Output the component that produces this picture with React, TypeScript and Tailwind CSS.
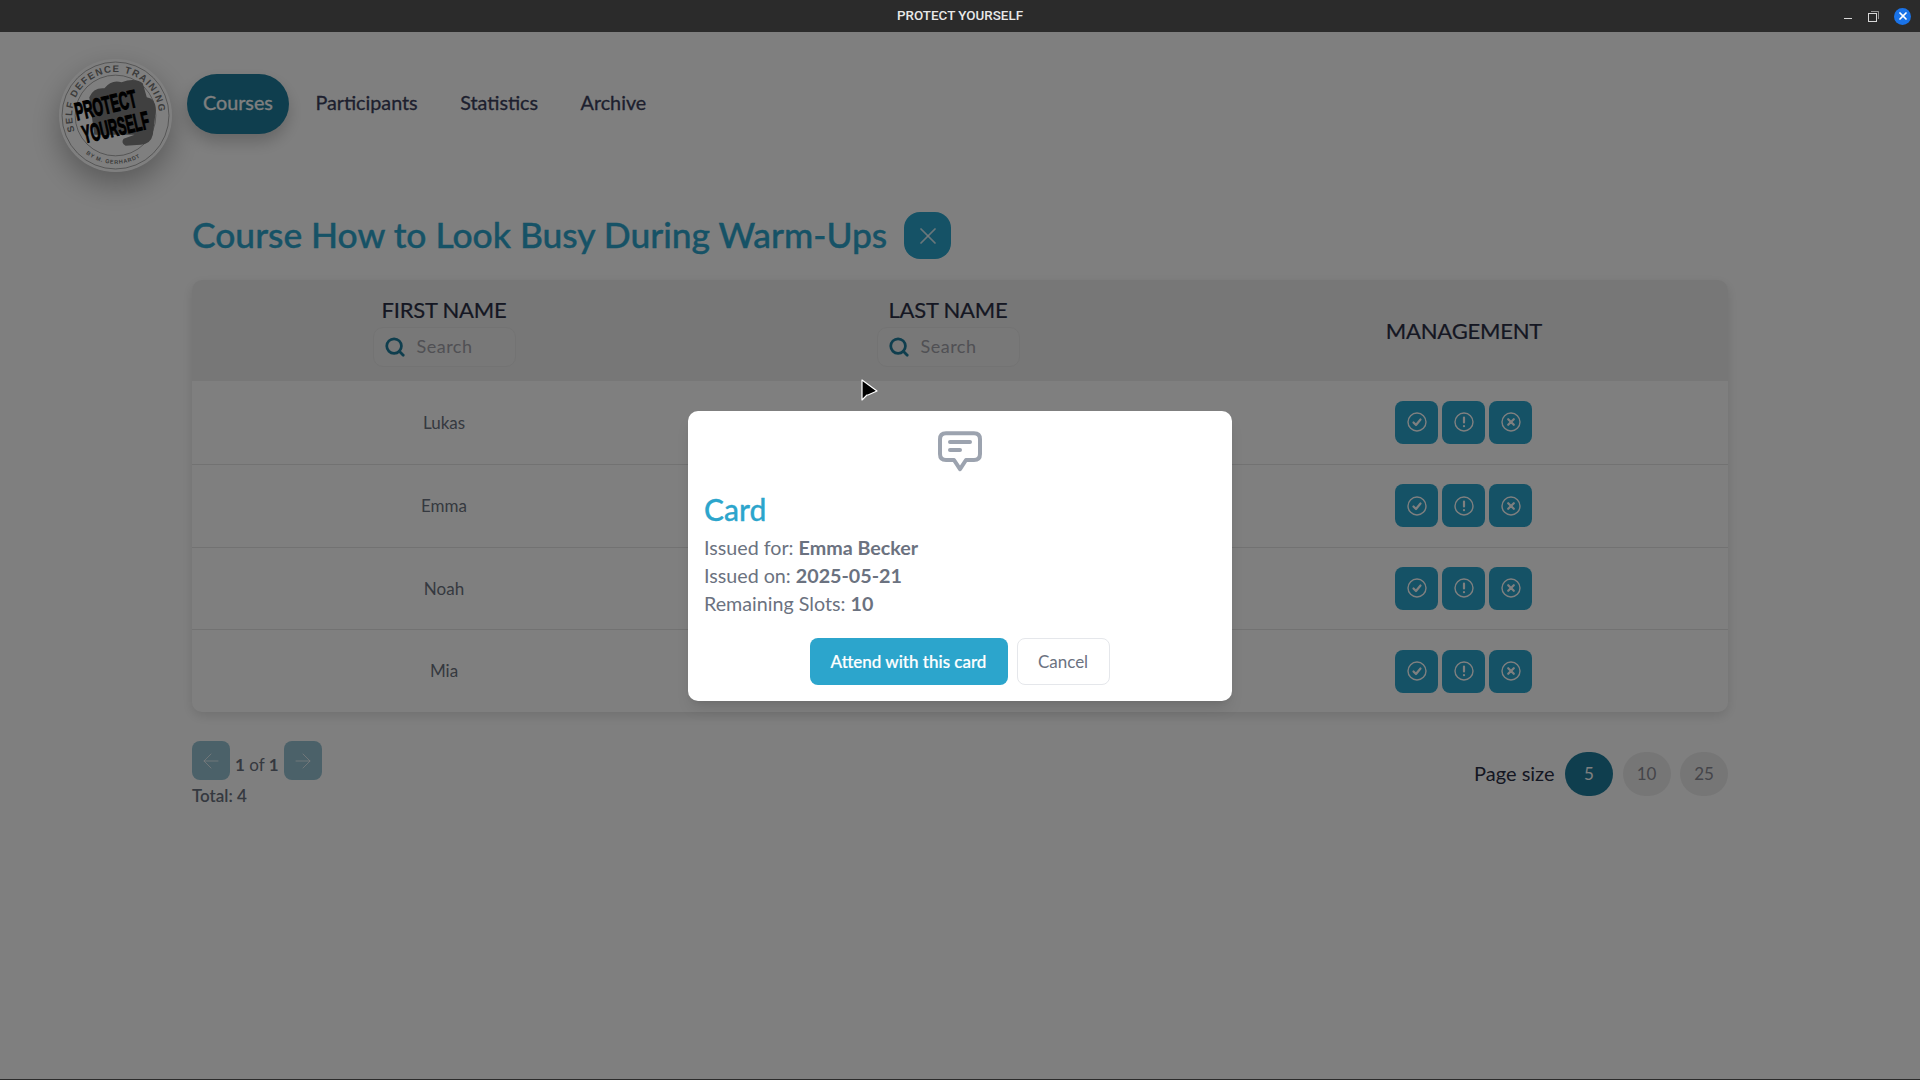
import { ArrowLeft, ArrowRight, Search, X } from "lucide-react";

const students = ["Lukas", "Emma", "Noah", "Mia"];

const Logo = () => (
    <svg viewBox="0 0 224 224" className="w-full h-full overflow-visible">
        <defs>
            <path id="logo-top" d="M 31.7 142.8 A 86 86 0 1 1 192.3 142.8" />
            <path id="logo-bottom" d="M 50.3 185.5 A 96 96 0 0 0 173.7 185.5" />
        </defs>
        <circle cx="112" cy="112" r="111" fill="#ffffff" />
        <circle cx="112" cy="112" r="106" fill="none" stroke="#8f8f8f" strokeWidth="1.5" />
        <circle cx="112" cy="112" r="80" fill="none" stroke="#8f8f8f" strokeWidth="1.5" />
        <text fill="#777" fontSize="19" fontWeight="700" fontFamily="Liberation Sans, sans-serif" letterSpacing="2.6">
            <textPath href="#logo-top">SELF DEFENCE TRAINING</textPath>
        </text>
        <text fill="#777" fontSize="11" fontWeight="700" fontFamily="Liberation Sans, sans-serif" letterSpacing="1.4">
            <textPath href="#logo-bottom" startOffset="4">BY M. GERHARDT</textPath>
        </text>
        <path d="M60 76 Q68 56 90 58 Q104 40 124 46 Q150 36 166 48 L174 76 Q192 78 192 102 L186 150 Q182 168 162 170 L132 172 Q122 166 128 158 L150 150 L70 150 Z" fill="#808080" />
        <g fill="#000" stroke="#000" strokeWidth="1.2" fontFamily="Liberation Sans, sans-serif" fontWeight="700">
            <text transform="translate(96 108) rotate(-13) scale(1 1.9)" textAnchor="middle" fontSize="26">PROTECT</text>
            <text transform="translate(116 152) rotate(-13) scale(0.95 1.9)" textAnchor="middle" fontSize="26">YOURSELF</text>
        </g>
    </svg>
);

const Cursor = () => (
    <svg viewBox="0 0 18 24" className="absolute left-[861px] top-[379px] w-[18px] h-[24px] z-30">
        <path d="M1 1 L1 21 L6 16 L7 16 L16 12 Z" fill="#000" stroke="#fff" strokeWidth="1.2" strokeLinejoin="round" />
    </svg>
);

const TitleBar = () => (
    <div className="relative h-8 shrink-0 bg-[#2b2b2b] flex items-center justify-center z-30">
        <span className="text-[13.4px] font-medium text-[#e8e8e8] mt-px" style={{ fontFamily: "Roboto, sans-serif" }}>PROTECT YOURSELF</span>
        <div className="absolute right-[9px] top-0 h-8 flex items-center gap-[15px] text-[#d8d8d8]">
            <span className="block w-2 h-px bg-[#d8d8d8] mt-[4px]"></span>
            <svg viewBox="0 0 11 11" className="w-[11px] h-[11px] ml-[1px]" fill="none" stroke="currentColor" strokeWidth="1">
                <rect x="0.5" y="2.5" width="8" height="8" />
                <path d="M3 0.5 H10.5 V8" opacity="0.6" />
            </svg>
            <span className="flex items-center justify-center w-[17px] h-[17px] rounded-full bg-[#1a73e8]">
                <X className="w-[12px] h-[12px] text-white" strokeWidth={3.5} />
            </span>
        </div>
    </div>
);

const Header = () => (
    <div className="flex items-start gap-[15px] pl-[59px] pt-[27px] h-[180px] shrink-0">
        <div className="w-[113px] h-[113px] rounded-full shadow-[0_12px_30px_rgba(0,0,0,0.3)]">
            <Logo />
        </div>
        <nav className="flex items-center gap-[10.5px] mt-[15px] text-[19.75px] text-[#3b3f5c] [-webkit-text-stroke:0.3px_currentColor]">
            <a className="h-[60px] flex items-center px-4 pb-[2px] rounded-[30px] bg-[#1e7d9c] text-white shadow-[0_8px_16px_rgba(0,0,0,0.2)]">Courses</a>
            <a className="h-[60px] flex items-center px-4 pb-[2px]">Participants</a>
            <a className="h-[60px] flex items-center px-4 pb-[2px]">Statistics</a>
            <a className="h-[60px] flex items-center px-4 pb-[2px]">Archive</a>
        </nav>
    </div>
);

const SearchBox = () => (
    <div className="flex items-center w-[143px] h-10 mx-auto rounded-[10px] border border-[#e6e6e6] bg-[#f0f0f0] pl-[10px] gap-[11px]">
        <Search className="w-[22px] h-[22px] text-[#1e7d9c]" strokeWidth={3} />
        <span className="text-[18px] tracking-[0.5px] text-[#a0a0a8] [-webkit-text-stroke:0px]">Search</span>
    </div>
);

const CheckIcon = () => (
    <svg viewBox="0 0 20 20" className="w-5 h-5" fill="none" stroke="currentColor" strokeLinecap="round" strokeLinejoin="round">
        <circle cx="10" cy="10" r="9" strokeWidth="1.4" />
        <path d="M6.5 10.5 L9 13 L13.5 7.5" strokeWidth="2.2" />
    </svg>
);

const AlertIcon = () => (
    <svg viewBox="0 0 20 20" className="w-5 h-5" fill="none" stroke="currentColor" strokeLinecap="round">
        <circle cx="10" cy="10" r="9" strokeWidth="1.4" />
        <path d="M10 5.5 V10.5 M10 14 V14.2" strokeWidth="2.2" />
    </svg>
);

const CrossIcon = () => (
    <svg viewBox="0 0 20 20" className="w-5 h-5" fill="none" stroke="currentColor" strokeLinecap="round">
        <circle cx="10" cy="10" r="9" strokeWidth="1.4" />
        <path d="M7.2 7.2 L12.8 12.8 M12.8 7.2 L7.2 12.8" strokeWidth="2.2" />
    </svg>
);

const ActionButton = ({ children }: { children: React.ReactNode }) => (
    <button className="w-[43px] h-[43px] flex items-center justify-center rounded-[8px] bg-[#2aa5cc] text-white">
        {children}
    </button>
);

const StudentsTable = () => (
    <div className="w-[1536px] rounded-[10px] bg-white shadow-[0_4px_12px_rgba(0,0,0,0.12)] overflow-hidden">
        <div className="grid grid-cols-[504px_504px_528px] h-[101px] bg-[#eeeeee] text-[22px] tracking-[-0.2px] text-[#2a2f45] text-center [-webkit-text-stroke:0.2px_currentColor]">
            <div className="flex flex-col justify-center gap-[2px]">
                <span className="leading-[30px]">FIRST NAME</span>
                <SearchBox />
            </div>
            <div className="flex flex-col justify-center gap-[2px]">
                <span className="leading-[30px]">LAST NAME</span>
                <SearchBox />
            </div>
            <div className="flex items-center justify-center">MANAGEMENT</div>
        </div>
        {students.map((name, i) => (
            <div key={name} className={`grid grid-cols-[504px_504px_528px] h-[82.75px] items-center text-center text-[17px] text-[#6b7280] ${i > 0 ? "border-t border-[#e5e5e5]" : ""}`}>
                <div>{name}</div>
                {/* last name sits behind the dialog */}
                <div></div>
                <div className="flex justify-center gap-1 mr-[1px]">
                    <ActionButton><CheckIcon /></ActionButton>
                    <ActionButton><AlertIcon /></ActionButton>
                    <ActionButton><CrossIcon /></ActionButton>
                </div>
            </div>
        ))}
    </div>
);

const Pagination = () => (
    <div className="flex justify-between w-[1536px] mt-[29px]">
        <div>
            <div className="flex items-center gap-[5px] h-[39px] text-[17px] text-[#6b7280]">
                <button className="w-[38px] h-[39px] flex items-center justify-center rounded-[8px] bg-[#96c3d3] text-white/70">
                    <ArrowLeft className="w-6 h-6" strokeWidth={1} />
                </button>
                <span className="mt-[8px]"><b className="font-bold">1</b> of <b className="font-bold">1</b></span>
                <button className="w-[38px] h-[39px] flex items-center justify-center rounded-[8px] bg-[#96c3d3] text-white/70">
                    <ArrowRight className="w-6 h-6" strokeWidth={1} />
                </button>
            </div>
            <div className="mt-[3px] text-[17px] font-semibold text-[#6b7280]">Total: 4</div>
        </div>
        <div className="flex items-center gap-[9.5px] h-[44px] mt-[11px]">
            <span className="text-[20px] text-[#2a2f45] mr-[1px] pb-[2px]">Page size</span>
            <span className="w-[48px] h-[44px] flex items-center justify-center rounded-full bg-[#1e7d9c] text-white text-[17px]">5</span>
            <span className="w-[48px] h-[44px] flex items-center justify-center rounded-full bg-[#ededed] text-[#8a8a94] text-[17px]">10</span>
            <span className="w-[48px] h-[44px] flex items-center justify-center rounded-full bg-[#ededed] text-[#8a8a94] text-[17px]">25</span>
        </div>
    </div>
);

const CardDialog = () => (
    <div className="absolute inset-x-0 top-8 bottom-0 bg-black/50 z-20">
        <div className="absolute left-[688px] top-[379px] w-[544px] h-[290px] rounded-[10px] bg-white px-4 pt-[17px] shadow-lg">
            <svg viewBox="0 0 24 24" className="w-[48px] h-[48px] mx-auto text-[#9ca3af]" fill="none" stroke="currentColor" strokeWidth="2" strokeLinecap="round" strokeLinejoin="round">
                <path d="M5 2.6 H19 Q22 2.6 22 5.6 V13 Q22 16 19 16 H15 L12 20.6 L9 16 H5 Q2 16 2 13 V5.6 Q2 2.6 5 2.6 Z" />
                <path d="M7 7 H17 M7 11 H12" strokeWidth="2" />
            </svg>
            <h2 className="mt-[15px] text-[30px] leading-[36px] font-medium text-[#2ca5cc] [-webkit-text-stroke:0.3px_currentColor]">Card</h2>
            <div className="mt-[7px] text-[19.7px] leading-[28px] text-[#6b7280]">
                <p>Issued for: <b className="font-bold">Emma Becker</b></p>
                <p>Issued on: <b className="font-bold">2025-05-21</b></p>
                <p>Remaining Slots: <b className="font-bold">10</b></p>
            </div>
            <div className="flex justify-center gap-[9px] mt-[20px] ml-[-1px]">
                <button className="w-[198px] h-[47px] rounded-[8px] bg-[#2ca5cc] text-white text-[17px] font-medium [-webkit-text-stroke:0.2px_currentColor]">Attend with this card</button>
                <button className="w-[93px] h-[47px] rounded-[8px] border border-[#e5e7eb] bg-white text-[#6b7280] text-[17px]">Cancel</button>
            </div>
        </div>
    </div>
);

export default function App() {
    return (
        <div className="relative w-[1920px] h-[1080px] overflow-hidden bg-white flex flex-col border-b border-[#2b2b2b]" style={{ fontFamily: "Lato, sans-serif" }}>
            <TitleBar />
            <Header />
            <main className="pl-[192px]">
                <div className="flex items-center gap-[17px] h-[47px]">
                    <h1 className="text-[35.4px] font-medium text-[#2ca5cc] -mt-[2px] [-webkit-text-stroke:0.4px_currentColor]">Course How to Look Busy During Warm-Ups</h1>
                    <button className="w-[47px] h-[47px] flex items-center justify-center rounded-[16px] bg-[#2aa5cc] text-white/80">
                        <X className="w-7 h-7" strokeWidth={1.5} />
                    </button>
                </div>
                <div className="mt-[21px]">
                    <StudentsTable />
                    <Pagination />
                </div>
            </main>
            <CardDialog />
            <Cursor />
        </div>
    );
}
